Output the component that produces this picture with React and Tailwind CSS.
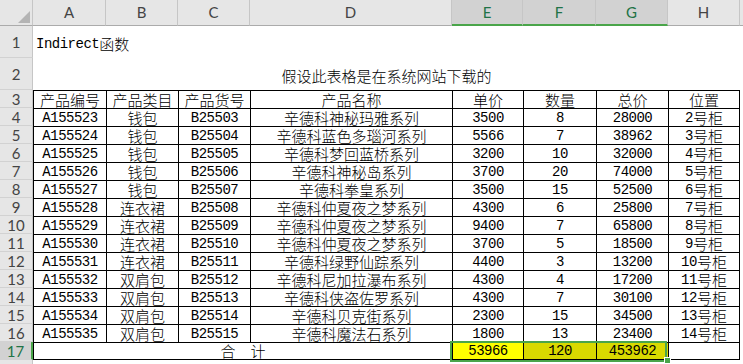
import React from 'react';

const rows = [
  ['A155523', '钱包', 'B25503', '辛德科神秘玛雅系列', '3500', '8', '28000', '2号柜'],
  ['A155524', '钱包', 'B25504', '辛德科蓝色多瑙河系列', '5566', '7', '38962', '3号柜'],
  ['A155525', '钱包', 'B25505', '辛德科梦回蓝桥系列', '3200', '10', '32000', '4号柜'],
  ['A155526', '钱包', 'B25506', '辛德科神秘岛系列', '3700', '20', '74000', '5号柜'],
  ['A155527', '钱包', 'B25507', '辛德科拳皇系列', '3500', '15', '52500', '6号柜'],
  ['A155528', '连衣裙', 'B25508', '辛德科仲夏夜之梦系列', '4300', '6', '25800', '7号柜'],
  ['A155529', '连衣裙', 'B25509', '辛德科仲夏夜之梦系列', '9400', '7', '65800', '8号柜'],
  ['A155530', '连衣裙', 'B25510', '辛德科仲夏夜之梦系列', '3700', '5', '18500', '9号柜'],
  ['A155531', '连衣裙', 'B25511', '辛德科绿野仙踪系列', '4400', '3', '13200', '10号柜'],
  ['A155532', '双肩包', 'B25512', '辛德科尼加拉瀑布系列', '4300', '4', '17200', '11号柜'],
  ['A155533', '双肩包', 'B25513', '辛德科侠盗佐罗系列', '4300', '7', '30100', '12号柜'],
  ['A155534', '双肩包', 'B25514', '辛德科贝克街系列', '2300', '15', '34500', '13号柜'],
  ['A155535', '双肩包', 'B25515', '辛德科魔法石系列', '1800', '13', '23400', '14号柜'],
];

const headers = ['产品编号', '产品类目', '产品货号', '产品名称', '单价', '数量', '总价', '位置'];

// latin runs in mono, CJK runs in Noto CJK (SimSun stand-in)
function Txt({ s }) {
  const parts = s.match(/[\x00-\x7f]+|[^\x00-\x7f]+/g) || [];
  return parts.map((p, i) =>
    /[\x00-\x7f]/.test(p[0]) ? (
      <span key={i} className="inline-block leading-[16px] font-['Liberation_Mono',monospace] text-[14px] tracking-[-0.5px]">{p}</span>
    ) : (
      <span key={i} className="inline-block leading-[16px] font-['Noto_Sans_CJK_SC',sans-serif] font-light text-[15px]">{p}</span>
    )
  );
}

function RowHead({ n, h = 'h-[18px]' }) {
  return (
    <div className={`${h} bg-[#e6e6e6] border-r border-b border-r-[#c6c6c6] border-b-[#d2d2d2] flex items-center justify-center font-['Lato',sans-serif] text-[15px] leading-[16px] text-[#444]`}>
      {n}
    </div>
  );
}

function Cell({ s, last }) {
  return (
    <div className={`h-[18px] border-l border-t border-black flex items-center justify-center text-black whitespace-nowrap overflow-hidden ${last ? 'border-r' : ''}`}>
      <Txt s={s} />
    </div>
  );
}

export default function App() {
  const letters = ['A', 'B', 'C', 'D', 'E', 'F', 'G', 'H'];
  return (
    <div className="w-[743px] h-[364px] overflow-hidden bg-white">
      <div className="grid grid-cols-[33px_73px_72px_72px_202px_71px_73px_72px_72px_3px]">
        {/* column headers */}
        <div className="h-[26px] bg-[#e6e6e6] border-r border-b border-r-[#c6c6c6] border-b-[#ababab] relative">
          <svg className="absolute left-[18px] top-[11px]" width="12" height="12" viewBox="0 0 12 12">
            <polygon points="12,0 12,12 0,12" fill="#b4b4b4" />
          </svg>
        </div>
        {letters.map((l) => {
          const sel = l === 'E' || l === 'F' || l === 'G';
          return (
            <div
              key={l}
              className={`h-[26px] border-r border-r-[#c6c6c6] flex items-center justify-center font-['Lato',sans-serif] text-[15px] ${
                sel ? 'bg-[#d2d2d2] border-b-2 border-b-[#4aa54a] text-[#217346]' : 'bg-[#e6e6e6] border-b border-b-[#ababab] text-[#444]'
              }`}
            >
              {l}
            </div>
          );
        })}
        <div className="h-[26px] bg-[#e6e6e6] border-b border-b-[#ababab]" />

        {/* row 1 */}
        <RowHead n="1" h="h-[32px]" />
        <div className="col-span-9 h-[32px] flex items-center pl-[3px] pt-[3px]">
          <Txt s="Indirect函数" />
        </div>

        {/* row 2 */}
        <RowHead n="2" h="h-[32px]" />
        <div className="col-span-8 h-[32px] flex items-end justify-center pb-[6px]">
          <Txt s="假设此表格是在系统网站下载的" />
        </div>
        <div />

        {/* row 3 headers */}
        <RowHead n="3" />
        {headers.map((h, i) => (
          <Cell key={h} s={h} last={i === 7} />
        ))}
        <div />

        {rows.map((r, ri) => (
          <React.Fragment key={ri}>
            <RowHead n={String(ri + 4)} />
            {r.map((c, ci) => (
              <Cell key={ci} s={c} last={ci === 7} />
            ))}
            <div />
          </React.Fragment>
        ))}

        {/* row 17 totals */}
        <div className="h-[18px] bg-[#d2d2d2] border-r-2 border-b border-r-[#4aa54a] border-b-[#d2d2d2] flex items-center justify-center font-['Lato',sans-serif] text-[15px] leading-[16px] text-[#217346]">
          17
        </div>
        <div className="col-span-4 h-[18px] border-l border-t border-b border-black flex items-center justify-center">
          <Txt s="合　计" />
        </div>
        <div className="col-span-3 relative grid grid-cols-[71px_73px_72px]">
          <div className="h-[18px] bg-[#ffff00] border-l border-t border-b border-black flex items-center justify-center">
            <Txt s="53966" />
          </div>
          <div className="h-[18px] bg-[#d9d900] border-l border-t border-b border-black flex items-center justify-center">
            <Txt s="120" />
          </div>
          <div className="h-[18px] bg-[#d9d900] border-l border-t border-b border-black flex items-center justify-center">
            <Txt s="453962" />
          </div>
          <div className="absolute left-[-2px] top-[-1px] right-[1px] bottom-[-2px] border-2 border-[#4aa54a] pointer-events-none" />
          <div className="absolute right-[-3px] bottom-[-4px] w-[7px] h-[7px] bg-[#4aa54a] border border-white" />
        </div>
        <div className="h-[18px] border-l border-t border-r border-b border-black" />
        <div />

        {/* row 18 (cut off) */}
        <RowHead n="" />
        <div className="col-span-9" />
      </div>
    </div>
  );
}
